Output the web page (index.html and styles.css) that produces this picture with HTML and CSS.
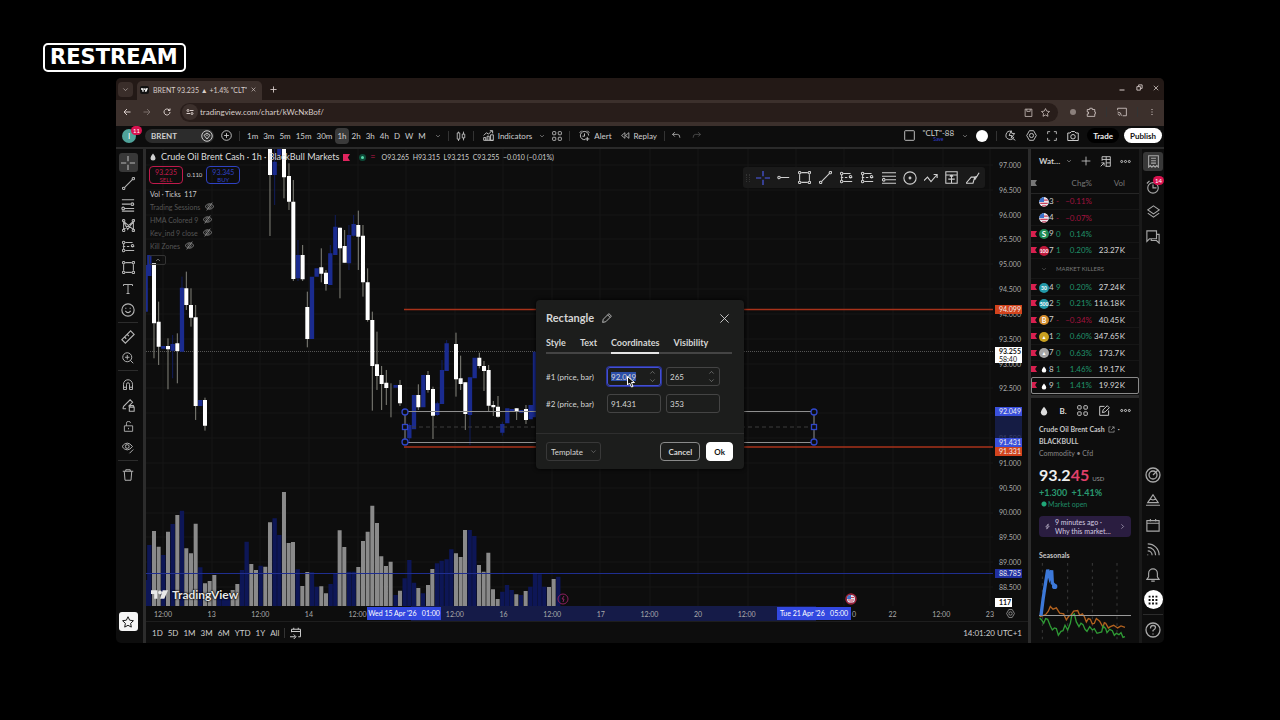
FILE: index.html
```html
<!DOCTYPE html>
<html lang="en">

<head>
    <meta charset="UTF-8" />
    <meta name="viewport" content="width=device-width, initial-scale=1" />
    <title>BRENT 93.235 ▲ +1.4% "CLT"</title>
    <link rel="stylesheet" href="styles.css">
</head>

<body>
    <!-- Icon set -->
    <svg class="sprite" aria-hidden="true">
        <symbol id="i-down" viewBox="0 0 16 16"><path d="M3 5.500l5 5 5-5" /></symbol>
        <symbol id="i-up" viewBox="0 0 16 16"><path d="M3 10.500l5-5 5 5" /></symbol>
        <symbol id="i-right" viewBox="0 0 16 16"><path d="M5.500 3l5 5-5 5" /></symbol>
        <symbol id="i-plus" viewBox="0 0 16 16"><path d="M8 1v14M1 8h14" /></symbol>
        <symbol id="i-pluscircle" viewBox="0 0 16 16"><circle cx="8" cy="8" r="7" /><path d="M8 4.500v7M4.500 8h7" /></symbol>
        <symbol id="i-close" viewBox="0 0 16 16"><path d="M2 2l12 12M14 2L2 14" /></symbol>
        <symbol id="i-back" viewBox="0 0 16 16"><path d="M15 8H2M8 2L2 8l6 6" /></symbol>
        <symbol id="i-forward" viewBox="0 0 16 16"><path d="M1 8h13M8 2l6 6-6 6" /></symbol>
        <symbol id="i-reload" viewBox="0 0 16 16"><path d="M14 8a6 6 0 1 1-2-4.500L14 5M14 1v4h-4" /></symbol>
        <symbol id="i-tune" viewBox="0 0 16 16"><circle cx="4" cy="5" r="2" /><path d="M8 5h7M1 11h7" /><circle cx="12" cy="11" r="2" /></symbol>
        <symbol id="i-star" viewBox="0 0 16 16"><path d="M8 1l2.200 4.600 5 .7-3.700 3.500.9 5L8 12.400 3.600 14.800l.9-5L.8 6.300l5-.7z" /></symbol>
        <symbol id="i-clip" viewBox="0 0 16 16"><path d="M2 2h12v13H2zM5 2v4h6V2" /></symbol>
        <symbol id="i-puzzle" viewBox="0 0 16 16"><path d="M2 4h4V2h4v2h4v4h1v3h-1v4H2v-4h2V8H2z" /></symbol>
        <symbol id="i-cast" viewBox="0 0 16 16"><path d="M1 5V2h14v12H9M1 8a6 6 0 0 1 6 6M1 11a3 3 0 0 1 3 3" /></symbol>
        <symbol id="i-kebab" viewBox="0 0 16 16"><path d="M8 2v2M8 7v2M8 12v2" /></symbol>
        <symbol id="i-more" viewBox="0 0 16 16"><circle cx="2.500" cy="8" r="1.500" /><circle cx="8" cy="8" r="1.500" /><circle cx="13.500" cy="8" r="1.500" /></symbol>
        <symbol id="i-min" viewBox="0 0 16 16"><path d="M3 12h10" /></symbol>
        <symbol id="i-restore" viewBox="0 0 16 16"><path d="M2 6h8v8H2zM6 6V2h8v8h-4" /></symbol>
        <symbol id="i-tag" viewBox="0 0 16 16"><circle cx="8" cy="8" r="7" /><path d="M4 7l4-3 4 3-4 5zM7 7h2" /></symbol>
        <symbol id="i-candle" viewBox="0 0 16 16"><path d="M2 3h4v10H2zM4 1v2M4 13v3M10 5h4v6h-4zM12 1v4M12 11v4" /></symbol>
        <symbol id="i-indicators" viewBox="0 0 16 16"><path d="M1 8l4-4 3 2 5-5M10 1h4v4M1 15v-4h3v4M6 15V9h3v6M11 15V7h4v8zM1 15h14" /></symbol>
        <symbol id="i-grid" viewBox="0 0 16 16"><rect x="1" y="1" width="5" height="5" rx="1" /><rect x="10" y="1" width="5" height="5" rx="1" /><rect x="1" y="10" width="5" height="5" rx="1" /><rect x="10" y="10" width="5" height="5" rx="1" /></symbol>
        <symbol id="i-alert" viewBox="0 0 16 16"><path d="M14 8a6 6 0 1 0-5 6M8 5v4H5M1 4l3-3M12 1l3 3M12 10v6M9 13h6" /></symbol>
        <symbol id="i-replay" viewBox="0 0 16 16"><path d="M7 3v10L1 8zM14 3v10L8 8z" /></symbol>
        <symbol id="i-undo" viewBox="0 0 16 16"><path d="M5 2L1 6l4 4M1 6h9q4 0 4 6" /></symbol>
        <symbol id="i-redo" viewBox="0 0 16 16"><path d="M11 2l4 4-4 4M15 6H6q-4 0-4 6" /></symbol>
        <symbol id="i-square" viewBox="0 0 16 16"><rect x="1" y="1" width="14" height="14" rx="1" /></symbol>
        <symbol id="i-quick" viewBox="0 0 16 16"><path d="M9 2a6 6 0 1 0 4 8M9 1L6 8h4l-1 4 5-7h-4zM11 12l4 3" /></symbol>
        <symbol id="i-settings" viewBox="0 0 16 16"><path d="M5 1h6l4 7-4 7H5L1 8z" /><circle cx="8" cy="8" r="3" /></symbol>
        <symbol id="i-full" viewBox="0 0 16 16"><path d="M1 5V1h4M11 1h4v4M15 11v4h-4M5 15H1v-4" /></symbol>
        <symbol id="i-camera" viewBox="0 0 16 16"><path d="M1 4h3l2-2h4l2 2h3v10H1z" /><circle cx="8" cy="9" r="3" /></symbol>
        <symbol id="i-cross" viewBox="0 0 16 16"><path d="M8 0v6M8 10v6M0 8h6M10 8h6" /></symbol>
        <symbol id="i-line" viewBox="0 0 16 16"><path d="M3 13L13 3" /><circle cx="2" cy="14" r="1.500" /><circle cx="14" cy="2" r="1.500" /></symbol>
        <symbol id="i-hline" viewBox="0 0 16 16"><path d="M4 8h11" /><circle cx="2.500" cy="8" r="1.500" /></symbol>
        <symbol id="i-fib" viewBox="0 0 16 16"><path d="M1 2h14M1 7h10M4 12h11M1 15h14" /><circle cx="13" cy="7" r="1.500" /><circle cx="2.500" cy="12" r="1.500" /></symbol>
        <symbol id="i-lines" viewBox="0 0 16 16"><path d="M0 2h16M0 6h16M4 10h12M0 14h16" /><circle cx="2" cy="10" r="1.500" /></symbol>
        <symbol id="i-pattern" viewBox="0 0 16 16"><path d="M2 13V3l12 10V3L2 13M2 3l5 10 7-10" /><circle cx="2" cy="2" r="1.500" /><circle cx="14" cy="2" r="1.500" /><circle cx="2" cy="14" r="1.500" /><circle cx="14" cy="14" r="1.500" /></symbol>
        <symbol id="i-forecast" viewBox="0 0 16 16"><path d="M4 3h9M4 13h11M1 8h3M6 8h3M11 8h4M2 5v6" /><circle cx="2" cy="3" r="1.500" /><circle cx="2" cy="13" r="1.500" /><circle cx="13" cy="7" r="1.500" /></symbol>
        <symbol id="i-rect" viewBox="0 0 16 16"><path d="M4 2h8M4 14h8M2 4v8M14 4v8" /><circle cx="2" cy="2" r="1.500" /><circle cx="14" cy="2" r="1.500" /><circle cx="2" cy="14" r="1.500" /><circle cx="14" cy="14" r="1.500" /></symbol>
        <symbol id="i-text" viewBox="0 0 16 16"><path d="M2 4V2h12v2M8 2v12M6 14h4" /></symbol>
        <symbol id="i-smile" viewBox="0 0 16 16"><circle cx="8" cy="8" r="7" /><path d="M5 9q3 4 6 0M5.500 5.500v1M10.500 5.500v1" /></symbol>
        <symbol id="i-ruler" viewBox="0 0 16 16"><path d="M1 11L11 1l4 4L5 15zM4 8l2 2M7 5l2 2" /></symbol>
        <symbol id="i-zoom" viewBox="0 0 16 16"><circle cx="7" cy="7" r="6" /><path d="M11 11l4 4M7 4v6M4 7h6" /></symbol>
        <symbol id="i-magnet" viewBox="0 0 16 16"><path d="M2 14V7a6 6 0 0 1 12 0v7h-4V7a2 2 0 0 0-4 0v7zM2 11h4M10 11h4" /></symbol>
        <symbol id="i-penlock" viewBox="0 0 16 16"><path d="M1 12l1-3 8-8 3 3-5 5M9 10h6v5H9zM10 10V8h4v2M1 12h4" /></symbol>
        <symbol id="i-lock" viewBox="0 0 16 16"><path d="M2 7h12v8H2zM5 7V4a3 3 0 0 1 6-1M8 10v2" /></symbol>
        <symbol id="i-eyepen" viewBox="0 0 16 16"><path d="M0 6q7-9 14 0-7 9-14 0zM10 15l5-5" /><circle cx="7" cy="6" r="2.500" /></symbol>
        <symbol id="i-trash" viewBox="0 0 16 16"><path d="M1 3h14M5 3V1h6v2M3 3l1 12h8l1-12" /></symbol>
        <symbol id="i-pencil" viewBox="0 0 16 16"><path d="M1 15l1-5 9-9 4 4-9 9zM9 3l4 4" /></symbol>
        <symbol id="i-eyeoff" viewBox="0 0 16 16"><path d="M0 8q8-10 16 0-8 10-16 0zM3 15L13 1" /><circle cx="8" cy="8" r="3" /></symbol>
        <symbol id="i-circle" viewBox="0 0 16 16"><circle cx="8" cy="8" r="7" /><circle cx="8" cy="8" r="1" /></symbol>
        <symbol id="i-zigzag" viewBox="0 0 16 16"><path d="M0 11l4-4 4 5 7-8M11 4h4v4" /></symbol>
        <symbol id="i-range" viewBox="0 0 16 16"><path d="M1 1h14v14H1zM1 5h14M8 5v10M4 10h8M6 7l2-2 2 2" /></symbol>
        <symbol id="i-path" viewBox="0 0 16 16"><path d="M0 14h8l2-7H6zM10 10l5-8M10 7l3-1" /></symbol>
        <symbol id="i-addtable" viewBox="0 0 16 16"><path d="M3 7V1h12v14H8M3 5h12M9 1v14M9 10h6M1 15l5-5M2 10h4v4" /></symbol>
        <symbol id="i-list" viewBox="0 0 16 16"><path d="M2 1h12v14l-2-2-2 2-2-2-2 2-2-2-2 2zM5 4h6M5 7h6M5 10h6" /></symbol>
        <symbol id="i-clock" viewBox="0 0 16 16"><circle cx="8" cy="9" r="6" /><path d="M8 5v4h4M1 4l3-3M12 1l3 3" /></symbol>
        <symbol id="i-layers" viewBox="0 0 16 16"><path d="M8 1l7 5-7 5-7-5zM1 10l7 5 7-5" /></symbol>
        <symbol id="i-chat" viewBox="0 0 16 16"><path d="M1 1h11v9H4l-3 3zM12 5h3v10l-3-3H6v-2" /></symbol>
        <symbol id="i-target" viewBox="0 0 16 16"><circle cx="8" cy="8" r="7" /><circle cx="8" cy="8" r="4" /><path d="M8 8l5-5" /></symbol>
        <symbol id="i-ideas" viewBox="0 0 16 16"><path d="M0 14h16M2 11l6-9 6 9zM5 7l3 1 3-1" /></symbol>
        <symbol id="i-calendar" viewBox="0 0 16 16"><path d="M1 3h14v12H1zM1 6h14M5 1v3M11 1v3" /></symbol>
        <symbol id="i-feed" viewBox="0 0 16 16"><path d="M2 13v1M2 9a5 5 0 0 1 5 5M2 5a9 9 0 0 1 9 9M2 1a13 13 0 0 1 13 13" /></symbol>
        <symbol id="i-bell" viewBox="0 0 16 16"><path d="M1 13l2-3V6a5 5 0 0 1 10 0v4l2 3zM6 15h4" /></symbol>
        <symbol id="i-dots" viewBox="0 0 16 16"><path class="fill" d="M1 1h3v3H1zM6.500 1h3v3h-3zM12 1h3v3h-3zM1 6.500h3v3H1zM6.500 6.500h3v3h-3zM12 6.500h3v3h-3zM1 12h3v3H1zM6.500 12h3v3h-3zM12 12h3v3h-3z" /></symbol>
        <symbol id="i-help" viewBox="0 0 16 16"><circle cx="8" cy="8" r="7" /><path d="M5.500 6.500q0-3 2.500-3t2.500 2q0 1.500-2.500 3v1M8 11.500v1" /></symbol>
        <symbol id="i-goto" viewBox="0 0 16 16"><path d="M2 7V3h12v10h-3M2 6h12M5 1v2M11 1v2M0 13h7M5 10l3 3-3 3" /></symbol>
        <symbol id="i-external" viewBox="0 0 16 16"><path d="M6 2H2v12h12v-4M9 2h5v5M14 2L7 9" /></symbol>
        <symbol id="i-edit" viewBox="0 0 16 16"><path d="M8 2H1v13h13V8M5 11l1-4 6-6 3 3-6 6z" /></symbol>
        <symbol id="i-bolt" viewBox="0 0 16 16"><path d="M10 2L4 9h4l-2 5 6-7H8z" /></symbol>
        <symbol id="i-drop" viewBox="0 0 16 16"><path class="fill" d="M8 1q5 6 5 9a5 5 0 0 1-10 0q0-3 5-9z" /></symbol>
        <symbol id="i-flag" viewBox="0 0 16 16"><path class="fill" d="M0 0h16l-5 8 5 8H0z" /></symbol>
        <symbol id="i-tv" viewBox="0 0 32 16"><path class="fill" d="M0 0h12v16H6V7H0zM22 0h10l-7 16h-8z" /><circle class="fill" cx="17" cy="4" r="3.500" /></symbol>
        <symbol id="i-us" viewBox="0 0 16 16"><circle cx="8" cy="8" r="8" style="fill:#e9e4ec;stroke:none" /><path d="M2 5h12M2 10h12M5 14h7" style="stroke:#c9415c;stroke-width:2" /><path d="M0 8a8 8 0 0 1 8-8v8z" style="fill:#3d71c9;stroke:none" /></symbol>
    </svg>

    <h1 class="logo">RESTREAM</h1>

    <div class="browser">
        <header class="tabstrip">
            <button class="tab-search" aria-label="Search tabs"><svg class="icon s7"><use href="#i-down" /></svg></button>
            <div class="tab">
                <span class="tab-icon"><svg class="tv-mark"><use href="#i-tv" /></svg></span>
                <span class="tab-title">BRENT 93.235 ▲ +1.4% "CLT"</span>
                <button aria-label="Close tab"><svg class="icon s5 bold"><use href="#i-close" /></svg></button>
            </div>
            <button class="new-tab" aria-label="New tab"><svg class="icon s7 bold"><use href="#i-plus" /></svg></button>
            <div class="window-buttons">
                <button aria-label="Minimize"><svg class="icon s8 bold"><use href="#i-min" /></svg></button>
                <button aria-label="Restore"><svg class="icon s7 bold"><use href="#i-restore" /></svg></button>
                <button aria-label="Close"><svg class="icon s6 bold"><use href="#i-close" /></svg></button>
            </div>
        </header>

        <div class="addressbar">
            <button aria-label="Back"><svg class="icon s8 bold"><use href="#i-back" /></svg></button>
            <button class="dim" aria-label="Forward"><svg class="icon s8 bold"><use href="#i-forward" /></svg></button>
            <button aria-label="Reload"><svg class="icon s8 bold"><use href="#i-reload" /></svg></button>
            <div class="omnibox">
                <span class="site-info"><svg class="icon s8 bold"><use href="#i-tune" /></svg></span>
                <input class="url" type="text" aria-label="Address" value="tradingview.com/chart/kWcNxBof/" />
                <svg class="icon s9"><use href="#i-clip" /></svg>
                <svg class="icon s9"><use href="#i-star" /></svg>
            </div>
            <div class="extensions">
                <span class="ext-dot"></span>
                <svg class="icon s10"><use href="#i-puzzle" /></svg>
                <span class="sep"></span>
                <svg class="icon s10"><use href="#i-cast" /></svg>
                <span class="sep"></span>
                <svg class="icon s8 bold"><use href="#i-kebab" /></svg>
            </div>
        </div>

        <div class="topbar">
            <span class="avatar">I<span class="badge">11</span></span>
            <button class="symbol-btn">BRENT <svg class="icon s12"><use href="#i-tag" /></svg></button>
            <button aria-label="Compare"><svg class="icon s11"><use href="#i-pluscircle" /></svg></button>
            <span class="sep"></span>
            <div class="intervals">
                <button>1m</button><button>3m</button><button>5m</button><button>15m</button><button>30m</button><button class="active">1h</button><button>2h</button><button>3h</button><button>4h</button><button>D</button><button>W</button><button>M</button>
            </div>
            <svg class="icon s6"><use href="#i-down" /></svg>
            <span class="sep"></span>
            <button aria-label="Candles"><svg class="icon s10"><use href="#i-candle" /></svg></button>
            <span class="sep"></span>
            <button class="with-icon"><svg class="icon s11"><use href="#i-indicators" /></svg>Indicators</button>
            <svg class="icon s6"><use href="#i-down" /></svg>
            <button aria-label="Templates"><svg class="icon s10"><use href="#i-grid" /></svg></button>
            <span class="sep"></span>
            <button class="with-icon"><svg class="icon s11"><use href="#i-alert" /></svg>Alert</button>
            <button class="with-icon"><svg class="icon s9"><use href="#i-replay" /></svg>Replay</button>
            <span class="sep"></span>
            <button aria-label="Undo"><svg class="icon s9"><use href="#i-undo" /></svg></button>
            <button class="dim redo" aria-label="Redo"><svg class="icon s9"><use href="#i-redo" /></svg></button>
            <div class="topbar-right">
                <svg class="icon s11"><use href="#i-square" /></svg>
                <div class="layout-name"><span>"CLT"-88</span><a href="#">Save</a></div>
                <svg class="icon s6"><use href="#i-down" /></svg>
                <span class="white-dot"></span>
                <span class="sep"></span>
                <div class="chart-actions">
                    <svg class="icon s11"><use href="#i-quick" /></svg>
                    <svg class="icon s11"><use href="#i-settings" /></svg>
                    <svg class="icon s10"><use href="#i-full" /></svg>
                    <svg class="icon s12"><use href="#i-camera" /></svg>
                </div>
                <div class="actions">
                    <button class="trade">Trade</button>
                    <button class="publish">Publish</button>
                </div>
            </div>
        </div>

        <div class="workspace">
            <nav class="tools" aria-label="Drawing tools">
                <button class="active" aria-label="Cross"><svg class="icon s14"><use href="#i-cross" /></svg></button>
                <button aria-label="Trend line"><svg class="icon s13"><use href="#i-line" /></svg></button>
                <button aria-label="Fib"><svg class="icon s14"><use href="#i-fib" /></svg></button>
                <button aria-label="Patterns"><svg class="icon s13"><use href="#i-pattern" /></svg></button>
                <button aria-label="Forecast"><svg class="icon s13"><use href="#i-forecast" /></svg></button>
                <button aria-label="Shapes"><svg class="icon s13"><use href="#i-rect" /></svg></button>
                <button aria-label="Text"><svg class="icon s12"><use href="#i-text" /></svg></button>
                <button aria-label="Emoji"><svg class="icon s14"><use href="#i-smile" /></svg></button>
                <hr>
                <button aria-label="Measure"><svg class="icon s14"><use href="#i-ruler" /></svg></button>
                <button aria-label="Zoom"><svg class="icon s12"><use href="#i-zoom" /></svg></button>
                <hr>
                <button aria-label="Magnet"><svg class="icon s12"><use href="#i-magnet" /></svg></button>
                <button aria-label="Stay in drawing mode"><svg class="icon s13"><use href="#i-penlock" /></svg></button>
                <button aria-label="Lock"><svg class="icon s11"><use href="#i-lock" /></svg></button>
                <button aria-label="Hide"><svg class="icon s12"><use href="#i-eyepen" /></svg></button>
                <hr>
                <button aria-label="Remove"><svg class="icon s12"><use href="#i-trash" /></svg></button>
                <button class="favorites" aria-label="Favorites"><svg class="icon s12"><use href="#i-star" /></svg></button>
            </nav>

            <main class="center">
                <div class="chart-row">
                    <div class="plot">
                        <svg class="chart" viewBox="146 149 847 457" preserveAspectRatio="none">
                            <!-- grid -->
                            <path class="grid" d="M146 165H993M146 190H993M146 215H993M146 239H993M146 264H993M146 289H993M146 314H993M146 339H993M146 364H993M146 388H993M146 413H993M146 438H993M146 463H993M146 488H993M146 513H993M146 537H993M146 562H993M146 587H993" />
                            <path class="grid" d="M163 149V606M212 149V606M260 149V606M309 149V606M358 149V606M406 149V606M455 149V606M503 149V606M552 149V606M600 149V606M650 149V606M698 149V606M748 149V606M796 149V606M844 149V606M893 149V606M943 149V606M990 149V606" />
                            <!-- volume -->
                            <g transform="translate(110 480) scale(.3333)">
                                <path class="vol-blue" d="M107 300V379M118 195V379M160 225V379M188 132V379M216 92V379M271 262V379M327 345V379M341 345V379M354 340V379M396 270V379M410 185V379M452 257V379M494 115V379M508 165V379M563 268V379M606 277V379M620 320V379M662 312V379M676 280V379M717 275V379M731 275V379M857 345V379" />
                                <path class="vol-gray" d="M132 153V379M146 200V379M174 155V379M202 105V379M229 205V379M243 220V379M257 131V379M285 310V379M299 303V379M313 285V379M368 330V379M382 312V379M424 252V379M438 270V379M466 260V379M480 127V379M522 36V379M536 189V379M549 186V379M577 318V379M592 276V379M634 319V379M648 340V379M689 151V379M703 201V379M745 261V379M759 183V379M773 155V379M787 77V379M801 129V379M814 229V379M828 258V379M842 245V379M870 332V379" />
                            </g>
                            <g transform="translate(400 480) scale(.3333)">
                                <path class="vol-blue" d="M14 295V379M28 240V379M42 308V379M69 340V379M111 250V379M125 242V379M140 238V379M154 208V379M209 150V379M223 168V379M307 335V379M321 315V379M335 330V379M363 345V379M391 320V379M405 278V379M419 283V379M433 320V379M475 290V379" />
                                <path class="vol-gray" d="M55 324V379M84 315V379M97 267V379M168 220V379M182 231V379M195 150V379M237 255V379M251 275V379M265 218V379M279 328V379M293 357V379M349 343V379M377 333V379M447 321V379M461 297V379" />
                            </g>
                            <path class="line-blue" d="M146 573.500H993" />
                            <path class="line-last" d="M146 351.500H993" />
                            <!-- candles -->
                            <g transform="translate(110 145) scale(.3333)">
                                <path class="wick-blue" d="M216 395V620M494 10V180M564 285V408M661 300V420M676 210V330M717 240V375M731 210V275M188 570V700" />
                                <path class="wick" d="M132 535V640M146 470V660M174 580V733M202 565V715M229 380V495M243 430V545M257 480V825M285 758V857M480 90V273M522 30V160M537 55V195M550 105V408M578 300V408M592 440V607M634 310V412M648 375V437M690 248V460M704 255V353M745 197V375M759 240V455M773 370V530M787 500V797M801 560V735M815 663V795M829 675V780M843 715V817M870 705V783" />
                                <path class="body-blue" d="M107 360V500M118 330V393M160 603V611M188 597V617M216 428V620M271 765V783M494 50V90M508 0V30M564 330V400M606 395V582M620 370V395M661 325V420M676 245V330M717 270V355M731 237V272M857 720V728" />
                                <path class="body" d="M132 355V535M146 530V605M174 603V613M202 595V618M229 430V480M243 480V518M257 517V783M285 765V842M480 0V90M522 0V97M537 93V170M550 170V402M578 330V403M592 486V582M634 367V386M648 383V417M690 248V310M704 303V353M745 240V275M759 272V412M773 412V525M787 525V663M801 658V693M815 690V717M829 713V729M870 720V775" />
                            </g>
                            <g transform="translate(380 290) scale(.3333)">
                                <path class="wick-blue" d="M88 400V460M186 210V342M200 150V243M270 262V465M367 395V437M172 335V378" />
                                <path class="wick" d="M115 283V360M144 243V308M159 290V447M228 128V320M242 197V300M256 277V420M298 188V235M312 213V303M326 225V365M340 333V378M354 318V383M410 355V390M438 345V402" />
                                <path class="body-blue" d="M88 405V445M102 315V418M130 255V352M172 340V375M186 240V342M200 160V243M270 262V375M284 203V265M367 402V428M382 355V400M396 357V366M424 360V368M452 345V388M465 185V382" />
                                <path class="body" d="M115 315V352M144 255V300M159 297V377M228 162V268M242 265V282M256 277V372M298 203V228M312 228V243M326 240V347M340 345V352M354 350V380M410 355V365M438 357V390" />
                            </g>
                            <!-- drawings -->
                            <path class="line-red" d="M404 309.500H993M404 447H993" />
                            <path class="shape-mid" d="M405 427H814" />
                            <path class="shape" d="M405 411.500H814V442.500H405z" />
                            <g class="handles"><circle cx="405" cy="412" r="3" /><rect x="402.500" y="424.500" width="5" height="5" /><circle cx="405" cy="442" r="3" /><circle cx="814" cy="412" r="3" /><rect x="811.500" y="424.500" width="5" height="5" /><circle cx="814" cy="442" r="3" /></g>
                            <circle class="event" cx="563" cy="599" r="5" /><path class="event" d="M564 596l-2 3h2l-1 3" />
                            <circle class="event-us" cx="851" cy="599" r="5" />
                            <use href="#i-us" x="847" y="595" width="8" height="8" />
                        </svg>

                        <div class="legend">
                            <div class="legend-title">
                                <svg class="icon s8"><use href="#i-drop" /></svg>
                                <span class="name">Crude Oil Brent Cash · 1h · BlackBull Markets</span>
                                <svg class="icon s7 flag"><use href="#i-flag" /></svg>
                                <span class="status"></span><span class="equal">=</span>
                                <span class="ohlc">O93.265&nbsp; H93.315&nbsp; L93.215&nbsp; C93.255&nbsp; −0.010 (−0.01%)</span>
                            </div>
                            <div class="quotes">
                                <button class="sell">93.235<small>SELL</small></button>
                                <span>0.110</span>
                                <button class="buy">93.345<small>BUY</small></button>
                            </div>
                            <ul class="studies">
                                <li class="on">Vol · Ticks&nbsp; 117</li>
                                <li>Trading Sessions <svg class="icon s9"><use href="#i-eyeoff" /></svg></li>
                                <li>HMA Colored 9 <svg class="icon s9"><use href="#i-eyeoff" /></svg></li>
                                <li>Kev_ind 9 close <svg class="icon s9"><use href="#i-eyeoff" /></svg></li>
                                <li>Kill Zones <svg class="icon s9"><use href="#i-eyeoff" /></svg></li>
                            </ul>
                            <button class="collapse" aria-label="Collapse"><svg class="icon s6"><use href="#i-up" /></svg></button>
                        </div>

                        <div class="draw-bar">
                            <span class="grip"></span>
                            <button class="picked" aria-label="Cross"><svg class="icon s14"><use href="#i-cross" /></svg></button>
                            <button aria-label="Ray"><svg class="icon s13"><use href="#i-hline" /></svg></button>
                            <button aria-label="Rectangle"><svg class="icon s13"><use href="#i-rect" /></svg></button>
                            <button aria-label="Line"><svg class="icon s13"><use href="#i-line" /></svg></button>
                            <button aria-label="Long"><svg class="icon s13"><use href="#i-forecast" /></svg></button>
                            <button aria-label="Short"><svg class="icon s13"><use href="#i-forecast" /></svg></button>
                            <button aria-label="Fib"><svg class="icon s14"><use href="#i-lines" /></svg></button>
                            <button aria-label="Circle"><svg class="icon s14"><use href="#i-circle" /></svg></button>
                            <button aria-label="Path"><svg class="icon s14"><use href="#i-zigzag" /></svg></button>
                            <button aria-label="Range"><svg class="icon s13"><use href="#i-range" /></svg></button>
                            <button aria-label="Brush"><svg class="icon s14"><use href="#i-path" /></svg></button>
                        </div>

                        <div class="watermark"><svg class="tv-mark"><use href="#i-tv" /></svg><span>TradingView</span></div>
                    </div>

                    <div class="price-axis">
                        <span>97.000</span><span>96.500</span><span>96.000</span><span>95.500</span><span>95.000</span><span>94.500</span><span>94.000</span><span>93.500</span><span>93.000</span><span>92.500</span><span>92.000</span><span>91.500</span><span>91.000</span><span>90.500</span><span>90.000</span><span>89.500</span><span>89.000</span><span>88.500</span>
                        <div class="price-range"></div>
                        <div class="tag orange t-upper">94.099</div>
                        <div class="tag white t-last"><b>93.255</b>58:40</div>
                        <div class="tag blue t-top">92.049</div>
                        <div class="tag blue t-bottom">91.431</div>
                        <div class="tag orange t-lower">91.331</div>
                        <div class="tag navy t-line">88.785</div>
                        <div class="tag white short t-vol"><b>117</b></div>
                    </div>
                </div>

                <div class="time-axis">
                    <div class="time-range"></div>
                    <div class="ticks">
                        <span>12:00</span><span>13</span><span>12:00</span><span>14</span><span>12:00</span><span></span><span>12:00</span><span>16</span><span>12:00</span><span>17</span><span>12:00</span><span>20</span><span>12:00</span><span></span><span class="cut">0</span><span>22</span><span>12:00</span><span>23</span>
                    </div>
                    <svg class="icon s9"><use href="#i-settings" /></svg>
                    <div class="time-tag start">Wed 15 Apr '26 &nbsp; 01:00</div>
                    <div class="time-tag end">Tue 21 Apr '26 &nbsp; 05:00</div>
                </div>

                <div class="bottombar">
                    <button>1D</button><button>5D</button><button>1M</button><button>3M</button><button>6M</button><button>YTD</button><button>1Y</button><button>All</button>
                    <span class="sep"></span>
                    <button aria-label="Go to"><svg class="icon s12"><use href="#i-goto" /></svg></button>
                    <span class="clock">14:01:20 UTC+1</span>
                </div>
            </main>

            <aside class="sidebar">
                <div class="watch-head">
                    <button class="watch-name">Wat… <svg class="icon s6"><use href="#i-down" /></svg></button>
                    <button aria-label="Add symbol"><svg class="icon s10"><use href="#i-plus" /></svg></button>
                    <button aria-label="Advanced view"><svg class="icon s11"><use href="#i-addtable" /></svg></button>
                    <button aria-label="More"><svg class="icon s11"><use href="#i-more" /></svg></button>
                </div>
                <table class="watchlist">
                    <colgroup><col class="c-flag"><col class="c-sym"><col class="c-last"><col class="c-chg"><col class="c-vol"><col></colgroup>
                    <thead>
                        <tr><th><svg class="icon s6"><use href="#i-flag" /></svg></th><th></th><th></th><th>Chg%</th><th>Vol</th><th></th></tr>
                    </thead>
                    <tbody>
                        <tr class="down"><td></td><td><svg class="coin"><use href="#i-us" /></svg>3</td><td>-</td><td>−0.11%</td><td></td><td></td></tr>
                        <tr class="down"><td></td><td><svg class="coin"><use href="#i-us" /></svg>4</td><td>-</td><td>−0.07%</td><td></td><td></td></tr>
                        <tr><td><svg class="icon s6"><use href="#i-flag" /></svg></td><td><span class="coin green">S</span>9</td><td>0</td><td>0.14%</td><td></td><td></td></tr>
                        <tr><td><svg class="icon s6"><use href="#i-flag" /></svg></td><td><span class="coin red">100</span>7</td><td>1</td><td>0.20%</td><td>23.27&#8202;K</td><td></td></tr>
                        <tr class="group"><td></td><td><svg class="icon s6"><use href="#i-down" /></svg></td><td colspan="4">MARKET KILLERS</td></tr>
                        <tr><td><svg class="icon s6"><use href="#i-flag" /></svg></td><td><span class="coin teal">30</span>4</td><td>9</td><td>0.20%</td><td>27.24&#8202;K</td><td></td></tr>
                        <tr><td><svg class="icon s6"><use href="#i-flag" /></svg></td><td><span class="coin teal">500</span>2</td><td>5</td><td>0.21%</td><td>116.18&#8202;K</td><td></td></tr>
                        <tr class="down"><td><svg class="icon s6"><use href="#i-flag" /></svg></td><td><span class="coin amber">B</span>7</td><td>-</td><td>−0.34%</td><td>40.45&#8202;K</td><td></td></tr>
                        <tr><td><svg class="icon s6"><use href="#i-flag" /></svg></td><td><span class="coin gold">▲</span>1</td><td>2</td><td>0.60%</td><td>347.65&#8202;K</td><td></td></tr>
                        <tr><td><svg class="icon s6"><use href="#i-flag" /></svg></td><td><span class="coin silver">▲</span>7</td><td>0</td><td>0.63%</td><td>173.7&#8202;K</td><td></td></tr>
                        <tr><td><svg class="icon s6"><use href="#i-flag" /></svg></td><td><svg class="coin drop"><use href="#i-drop" /></svg>8</td><td>1</td><td>1.46%</td><td>19.17&#8202;K</td><td></td></tr>
                        <tr class="selected"><td><svg class="icon s6"><use href="#i-flag" /></svg></td><td><svg class="coin drop"><use href="#i-drop" /></svg>9</td><td>1</td><td>1.41%</td><td>19.92&#8202;K</td><td></td></tr>
                    </tbody>
                </table>

                <section class="details">
                    <div class="details-head">
                        <svg class="icon s10"><use href="#i-drop" /></svg>
                        <b>B.</b>
                        <svg class="icon s11"><use href="#i-grid" /></svg>
                        <svg class="icon s11"><use href="#i-edit" /></svg>
                        <svg class="icon s11"><use href="#i-more" /></svg>
                    </div>
                    <p>Crude Oil Brent Cash <svg class="icon s7"><use href="#i-external" /></svg> ·</p>
                    <p>BLACKBULL</p>
                    <p class="muted">Commodity • Cfd</p>
                    <div class="price">93.2<em>45</em><small>USD</small></div>
                    <div class="change">+1.300&nbsp; +1.41%</div>
                    <div class="market">Market open</div>
                    <a class="news" href="#">
                        <svg class="icon s7"><use href="#i-bolt" /></svg>
                        <span>9 minutes ago ·<br>Why this market…</span>
                        <svg class="icon s7"><use href="#i-right" /></svg>
                    </a>
                    <h2>Seasonals</h2>
                    <svg class="seasonals" viewBox="0 0 276 230" preserveAspectRatio="none">
                        <path d="M10 0V230M86 0V230M160 0V230M234 0V230" stroke="#3a3a3a" stroke-width="3" stroke-dasharray="8 12" />
                        <path d="M2 160L10 158 20 154 28 144 34 130 42 138 52 134 62 150 74 152 82 170 90 158 96 156 104 144 116 142 122 156 130 152 136 160 142 176 148 166 154 168 160 182 166 180 172 166 182 174 192 192 196 178 200 180 208 194 214 190 224 186 236 194 246 188 258 192" stroke="#b3621f" stroke-width="4" />
                        <path d="M2 164L8 170 14 180 20 166 26 168 34 188 40 200 46 194 52 196 58 216 66 204 72 202 78 186 86 200 94 180 98 158 106 152 112 176 120 190 126 180 132 184 138 198 144 204 152 190 160 200 166 196 174 210 188 206 192 188 200 196 204 208 212 198 220 202 226 216 232 210 240 214 246 208 252 222 258 220" stroke="#2f9a35" stroke-width="4" />
                        <path d="M0 157H276" stroke="#9a9a9a" stroke-width="3" />
                        <path d="M6 157L12 110 18 70 26 20 32 42 38 22 40 60 46 66" stroke="#3c78d8" stroke-width="10" /><circle cx="47" cy="70" r="8" fill="#3c78d8" stroke="none" />
                    </svg>
                </section>
            </aside>

            <nav class="rail" aria-label="Widgets">
                <button class="active" aria-label="Watchlist"><svg class="icon s13"><use href="#i-list" /></svg></button>
                <button aria-label="Alerts"><svg class="icon s14"><use href="#i-clock" /></svg><span class="badge">14</span></button>
                <button aria-label="Objects"><svg class="icon s13"><use href="#i-layers" /></svg></button>
                <button aria-label="Chats"><svg class="icon s14"><use href="#i-chat" /></svg></button>
                <button class="push" aria-label="Screeners"><svg class="icon s16"><use href="#i-target" /></svg></button>
                <button aria-label="Ideas"><svg class="icon s14"><use href="#i-ideas" /></svg></button>
                <button aria-label="Calendars"><svg class="icon s14"><use href="#i-calendar" /></svg></button>
                <button aria-label="News"><svg class="icon s14"><use href="#i-feed" /></svg></button>
                <button aria-label="Notifications"><svg class="icon s14"><use href="#i-bell" /></svg></button>
                <button class="apps" aria-label="Products"><svg class="icon s10"><use href="#i-dots" /></svg></button>
                <hr>
                <button aria-label="Help"><svg class="icon s16"><use href="#i-help" /></svg></button>
            </nav>
        </div>

        <form class="dialog" role="dialog" aria-label="Rectangle">
            <div class="dialog-head">
                <h2>Rectangle</h2>
                <svg class="icon s10"><use href="#i-pencil" /></svg>
                <button type="button" aria-label="Close"><svg class="icon s11"><use href="#i-close" /></svg></button>
            </div>
            <div class="tabs">
                <button type="button">Style</button>
                <button type="button">Text</button>
                <button type="button" class="current">Coordinates</button>
                <button type="button">Visibility</button>
            </div>
            <div class="fields">
                <label for="price1">#1 (price, bar)</label>
                <div class="field focused"><input id="price1" type="text" value="92.049" /><span class="spin"><svg class="icon s7"><use href="#i-up" /></svg><svg class="icon s7"><use href="#i-down" /></svg></span></div>
                <div class="field"><input type="text" aria-label="#1 bar" value="265" /><span class="spin"><svg class="icon s7"><use href="#i-up" /></svg><svg class="icon s7"><use href="#i-down" /></svg></span></div>
                <label for="price2">#2 (price, bar)</label>
                <div class="field"><input id="price2" type="text" value="91.431" /></div>
                <div class="field"><input type="text" aria-label="#2 bar" value="353" /></div>
            </div>
            <div class="dialog-foot">
                <div class="template">
                    <select aria-label="Template"><option>Template</option></select>
                    <svg class="icon s7"><use href="#i-down" /></svg>
                </div>
                <button type="button" class="cancel">Cancel</button>
                <button type="button" class="ok">Ok</button>
            </div>
            <svg class="cursor" viewBox="0 0 16 24"><path d="M1 1v17l4-4 4 8 3-1-3-8h6z" /></svg>
        </form>
    </div>
</body>

</html>
```
FILE: styles.css
```css
/* Reset */

* {
    margin: 0;
    padding: 0;
    box-sizing: border-box;
}

body {
    font-family: Lato, 'Open Sans', sans-serif;
    font-size: 9px;
    line-height: 12px;
    background: #000;
    color: #cfcfcf;
}

button,
input,
select {
    font: inherit;
    color: inherit;
    background: none;
    border: none;
    outline: none;
}

button {
    display: flex;
    align-items: center;
    justify-content: center;
    cursor: pointer;
    flex-shrink: 0;
}

a {
    text-decoration: none;
}

/* Icons */

.sprite {
    position: absolute;
    width: 0;
    height: 0;
}

.icon {
    fill: none;
    stroke: currentColor;
    stroke-width: 1.3;
    flex-shrink: 0;
    display: block;
}

.icon.bold {
    stroke-width: 2;
}

.fill {
    fill: currentColor;
    stroke: none;
}

.s5 { width: 5px; height: 5px; }
.s6 { width: 6px; height: 6px; }
.s7 { width: 7px; height: 7px; }
.s8 { width: 8px; height: 8px; }
.s9 { width: 9px; height: 9px; }
.s10 { width: 10px; height: 10px; }
.s11 { width: 11px; height: 11px; }
.s12 { width: 12px; height: 12px; }
.s13 { width: 13px; height: 13px; }
.s14 { width: 14px; height: 14px; }
.s16 { width: 16px; height: 16px; }

.dim {
    opacity: 0.4;
}

.sep {
    width: 1px;
    height: 10px;
    background: #333;
    flex-shrink: 0;
}

.badge {
    position: absolute;
    top: -3px;
    right: -6px;
    background: #d8124f;
    color: #fff;
    font-size: 6px;
    line-height: 9px;
    min-width: 10px;
    padding: 0 2px;
    border-radius: 5px;
    text-align: center;
}

.logo {
    width: fit-content;
    margin: 43px 0 6px 43px;
    padding: 0 6px 0 5px;
    border: 2px solid #fff;
    border-radius: 5px;
    color: #fff;
    font: 700 21px/25px 'DejaVu Sans', sans-serif;
}

/* Browser chrome */

.browser {
    position: relative;
    margin: 0 116px;
    border-radius: 5px;
    overflow: hidden;
    background: #0d0d0d;
}

.tabstrip {
    display: flex;
    align-items: center;
    height: 22px;
    padding: 0 5px 0 2px;
    background: #231916;
    color: #d8cdca;
}

.tab-search {
    width: 15px;
    height: 15px;
    border-radius: 4px;
    background: #3a2e2a;
}

.tab {
    display: flex;
    align-items: center;
    align-self: flex-end;
    gap: 4px;
    width: 125px;
    height: 19px;
    margin-left: 4px;
    padding: 0 6px 2px 3px;
    border-radius: 5px 5px 0 0;
    background: #3c302c;
}

.tab-icon {
    display: flex;
    padding: 2px 1px;
    border-radius: 2px;
    background: #111;
}

.tab-icon .tv-mark {
    width: 7px;
    height: 4px;
    color: #fff;
}

.tab-title {
    flex: 1;
    font-size: 7px;
    white-space: nowrap;
    overflow: hidden;
}

.new-tab {
    margin-left: 4px;
    padding: 4px;
}

.window-buttons {
    display: flex;
    gap: 10px;
    margin-left: auto;
    margin-bottom: 3px;
}

.addressbar {
    display: flex;
    align-items: center;
    height: 26px;
    padding: 0 8px 2px 7px;
    gap: 12px;
    background: #3c302c;
    color: #d8cdca;
}

.omnibox {
    display: flex;
    align-items: center;
    flex: 1;
    gap: 8px;
    height: 19px;
    padding: 0 8px 0 2px;
    margin-left: -3px;
    border-radius: 10px;
    background: #281d1a;
}

.site-info {
    padding: 4px;
    border-radius: 50%;
    background: #3c302c;
}

.url {
    flex: 1;
    margin-left: -6px;
    font-size: 8px;
}

.extensions {
    display: flex;
    align-items: center;
    gap: 10px;
}

.ext-dot {
    width: 6px;
    height: 6px;
    border-radius: 50%;
    background: #8b807c;
}

/* Top toolbar */

.topbar {
    display: flex;
    align-items: center;
    height: 23px;
    padding: 0 2px 2px 6px;
    border-bottom: 2px solid #2a2a2a;
    gap: 7px;
    font-size: 8px;
}

.avatar {
    position: relative;
    width: 14px;
    height: 14px;
    border-radius: 50%;
    background: #4fa39a;
    color: #fff;
    line-height: 14px;
    text-align: center;
    margin-right: 2px;
}

.symbol-btn {
    width: 69px;
    height: 14px;
    padding: 0 1px 0 6px;
    border-radius: 7px;
    background: #2c2c2c;
    font-weight: 700;
    justify-content: space-between;
}

.intervals {
    display: flex;
    gap: 5px;
    margin-right: 2px;
}

.intervals .active {
    background: #3a3a3a;
    border-radius: 2px;
    box-shadow: 0 0 0 2px #3a3a3a;
}

.with-icon {
    gap: 4px;
    margin-left: 2px;
}

.redo {
    margin-left: 4px;
}

.topbar-right {
    display: flex;
    align-items: center;
    gap: 8px;
    margin-left: auto;
}

.layout-name {
    display: flex;
    flex-direction: column;
    align-items: center;
    line-height: 8px;
}

.layout-name a {
    color: #3540d0;
    font-size: 5px;
    line-height: 5px;
}

.white-dot {
    width: 12px;
    height: 12px;
    border-radius: 50%;
    background: #fff;
}

.chart-actions {
    display: flex;
    align-items: center;
    gap: 10px;
}

.actions {
    display: flex;
    gap: 5px;
}

.trade,
.publish {
    height: 15px;
    padding: 0 6px;
    border-radius: 8px;
    font-weight: 700;
}

.trade {
    background: #000;
    color: #eee;
}

.publish {
    background: #fff;
    color: #111;
}

/* Workspace */

.workspace {
    display: flex;
}

.tools {
    display: flex;
    flex-direction: column;
    align-items: center;
    width: 30px;
    padding: 3px 3px 12px 0;
    border-right: 3px solid #2c2c2c;
    color: #b5b5b5;
}

.tools button {
    width: 19px;
    height: 21px;
}

.tools .active,
.rail .active {
    background: #383838;
    border-radius: 3px;
}

.tools .active {
    height: 19px;
    margin: 1px 0;
}

.tools hr,
.rail hr {
    width: 20px;
    border: none;
    border-top: 1px solid #2c2c2c;
    margin: 2px 0 3px;
}

.tools .favorites {
    height: 19px;
    margin-top: auto;
    border-radius: 3px;
    background: #f5f5f5;
    color: #111;
}

.center {
    flex: 1;
    min-width: 0;
}

.chart-row {
    display: flex;
}

.plot {
    position: relative;
    flex: 1;
    min-width: 0;
}

.chart {
    display: block;
    width: 100%;
    height: 457px;
    fill: none;
}

.grid { stroke: #161616; }
.vol-blue { stroke: #0d1656; stroke-width: 13; }
.vol-gray { stroke: #8a8a8a; stroke-width: 12; }
.wick { stroke: #85857c; stroke-width: 3; }
.wick-blue { stroke: #111d5c; stroke-width: 3; }
.body { stroke: #fff; stroke-width: 12; }
.body-blue { stroke: #1a2b8f; stroke-width: 13; }
.line-blue { stroke: #1f2e90; }
.line-last { stroke: #555; stroke-dasharray: 1 1; }
.line-red { stroke: #a8321a; stroke-width: 1.5; }
.shape { stroke: #8f8f8f; }
.shape-mid { stroke: #3c3c3c; stroke-dasharray: 4 3; }
.handles { stroke: #2f46c8; fill: #0d0d0d; stroke-width: 1.3; }
.event { stroke: #8c2060; }
.event-us { fill: #16204a; stroke: #a3243a; stroke-width: 1.5; }

.legend {
    position: absolute;
    top: 2px;
    left: 3px;
}

.legend-title {
    display: flex;
    align-items: center;
    gap: 4px;
    white-space: nowrap;
}

.name {
    font-size: 9px;
    color: #ddd;
}

.flag {
    color: #e0245e;
}

.status {
    width: 7px;
    height: 7px;
    margin-left: 5px;
    border-radius: 50%;
    border: 2px solid #0d4a38;
    background: #58d8a8;
}

.equal {
    color: #c01a4c;
}

.ohlc {
    margin-left: 2px;
    font-size: 7px;
}

.quotes {
    display: flex;
    align-items: center;
    gap: 4px;
    margin: 3px 0 3px;
    font-size: 6px;
}

.quotes button {
    flex-direction: column;
    width: 34px;
    height: 18px;
    border: 1px solid;
    border-radius: 4px;
    font-size: 7px;
    line-height: 8px;
}

.quotes small {
    font-size: 6px;
    line-height: 7px;
}

.sell {
    color: #c01a4c;
}

.buy {
    color: #2f42c4;
}

.studies {
    list-style: none;
    padding-left: 1px;
    font-size: 7px;
    color: #555;
}

.studies li {
    display: flex;
    align-items: center;
    gap: 5px;
    height: 13px;
}

.studies .on {
    color: #ccc;
}

.studies .icon {
    color: #999;
}

.collapse {
    width: 17px;
    height: 10px;
    margin-top: 3px;
    border: 1px solid #333;
    border-radius: 2px;
}

.draw-bar {
    position: absolute;
    top: 18px;
    right: 8px;
    display: flex;
    align-items: center;
    height: 21px;
    padding: 0 2px 0 0;
    border-radius: 3px;
    background: #1a1a1a;
}

.draw-bar button {
    width: 21px;
    height: 21px;
}

.draw-bar .picked {
    color: #4c5cf0;
}

.grip {
    width: 4px;
    height: 8px;
    margin: 0 2px 0 3px;
    border: dotted #333;
    border-width: 0 1px;
}

.watermark {
    position: absolute;
    left: 5px;
    bottom: 4px;
    display: flex;
    align-items: center;
    gap: 4px;
    color: #e8e8e8;
    font-size: 12px;
    line-height: 15px;
    font-weight: 700;
    text-shadow: 0 0 2px #000, 0 0 2px #000, 0 0 1px #000;
}

.watermark .tv-mark {
    width: 17px;
    height: 9px;
}

/* Axes */

.price-axis {
    position: relative;
    display: flex;
    flex-direction: column;
    justify-content: space-between;
    width: 35px;
    padding: 11px 0 14px 6px;
    font-size: 7px;
    line-height: 10px;
    color: #aaa;
}

.price-range {
    position: absolute;
    top: 262px;
    left: 2px;
    width: 27px;
    height: 31px;
    background: #182052;
    opacity: 0.8;
}

.tag {
    position: absolute;
    left: 2px;
    width: 27px;
    padding-left: 4px;
    line-height: 9px;
    color: #eee;
}

.tag b {
    display: block;
}

.orange { background: #d2431d; }
.tag.blue { background: #3a50dc; }
.navy { background: #2030a0; }
.tag.white { background: #fff; color: #111; }
.tag.short { width: 17px; }

.t-upper { top: 156px; }
.t-last { top: 198px; line-height: 8px; }
.t-top { top: 258px; }
.t-bottom { top: 289px; }
.t-lower { top: 298px; }
.t-line { top: 420px; }
.t-vol { top: 449px; }

.time-axis {
    position: relative;
    display: flex;
    align-items: center;
    height: 15px;
    padding: 0 13px 0 5px;
    font-size: 7px;
    color: #aaa;
}

.ticks {
    position: relative;
    display: flex;
    justify-content: space-between;
    flex: 1;
    margin-right: 4px;
}

.ticks span {
    width: 24px;
    text-align: center;
    white-space: nowrap;
}

.ticks .cut {
    text-align: right;
}

.time-range {
    position: absolute;
    left: 30%;
    right: 24%;
    top: 0;
    bottom: 0;
    background: #151b48;
}

.time-tag {
    position: absolute;
    top: 1px;
    width: 74px;
    background: #3248e0;
    color: #fff;
    line-height: 13px;
    text-align: center;
    white-space: nowrap;
}

.time-tag.start {
    left: 221px;
}

.time-tag.end {
    right: 177px;
}

.bottombar {
    display: flex;
    align-items: center;
    height: 22px;
    padding: 0 6px 0 6px;
    gap: 5px;
    border-top: 1px solid #1e1e1e;
    font-size: 8px;
}

.clock {
    margin-left: auto;
}

/* Right sidebar */

.sidebar {
    width: 114px;
    flex-shrink: 0;
    border-left: 3px solid #2c2c2c;
    border-right: 3px solid #1a1a1a;
}

.watch-head {
    display: flex;
    align-items: center;
    justify-content: space-between;
    height: 24px;
    padding: 0 8px;
}

.watch-name {
    gap: 6px;
    font-weight: 700;
    font-size: 8px;
}

.watchlist {
    width: 100%;
    height: 221px;
    table-layout: fixed;
    border-collapse: collapse;
    font-size: 8px;
    line-height: 10px;
}

.c-flag { width: 7px; }
.c-sym { width: 18px; }
.c-last { width: 5px; }
.c-chg { width: 31px; }
.c-vol { width: 33px; }

.watchlist th {
    height: 20px;
    border-bottom: 1px solid #262626;
    color: #777;
    font-weight: 400;
    text-align: right;
    white-space: nowrap;
}

.watchlist td {
    height: 16px;
    border-bottom: 1px solid #161616;
    white-space: nowrap;
    color: #20926a;
}

.watchlist td:first-child .icon {
    color: #d8204f;
}

.watchlist td:nth-child(2) {
    color: #ccc;
}

.watchlist td:nth-child(4) {
    text-align: right;
}

.watchlist td:nth-child(5) {
    color: #d5d5d5;
    text-align: right;
}

.watchlist .down td:nth-child(3),
.watchlist .down td:nth-child(4) {
    color: #a3133f;
}

.watchlist .group td {
    height: 20px;
    font-size: 6px;
    text-align: left;
    color: #777;
}

.watchlist .group td:nth-child(2) .icon {
    margin-left: 3px;
}

.watchlist .selected {
    outline: 1px solid #8a8a8a;
    outline-offset: -1px;
    border-radius: 2px;
}

.coin {
    display: inline-block;
    width: 10px;
    height: 10px;
    margin: 0 0 0 1px;
    border-radius: 50%;
    color: #fff;
    font-size: 5px;
    font-weight: 700;
    text-align: center;
    vertical-align: middle;
}

.coin.green { background: #1f8a55; font-size: 8px; }
.coin.red { background: #c01a3c; }
.coin.teal { background: #2298a8; }
.coin.amber { background: #d08a2c; font-size: 7px; }
.coin.gold { background: #c8a020; }
.coin.silver { background: #a5a5a5; }
.coin.drop { height: 7px; }

.details {
    border-top: 3px solid #2c2c2c;
    padding: 0 8px;
    margin-top: 1px;
    font-size: 7px;
    color: #c5c5c5;
}

.details-head {
    display: flex;
    align-items: center;
    justify-content: space-between;
    height: 25px;
    font-size: 8px;
    color: #ddd;
}

.details p {
    display: flex;
    align-items: center;
    gap: 3px;
    line-height: 12px;
    font-weight: 700;
}

.details p.muted {
    color: #888;
    font-weight: 400;
}

.price {
    margin-top: 7px;
    font-size: 16px;
    line-height: 18px;
    font-weight: 700;
    color: #eee;
}

.price em {
    font-style: normal;
    color: #e0406a;
}

.price small {
    margin-left: 3px;
    font-size: 6px;
    font-weight: 400;
    color: #999;
}

.change {
    font-size: 9px;
    line-height: 10px;
    font-weight: 700;
    color: #2a9a70;
}

.market {
    color: #1f8a65;
    padding-left: 7px;
    margin-left: 2px;
    line-height: 12px;
    background: radial-gradient(circle at 3px 6px, #20a878 2px, transparent 3px);
}

.news {
    display: flex;
    align-items: center;
    gap: 4px;
    height: 21px;
    margin: 6px 0 12px;
    padding: 0 5px;
    border-radius: 4px;
    background: #2a1d40;
    color: #d5cce0;
    line-height: 9px;
    white-space: nowrap;
}

.news span {
    flex: 1;
}

.details h2 {
    font-size: 7px;
    font-weight: 700;
}

.seasonals {
    display: block;
    width: 100%;
    height: 77px;
    margin-top: 2px;
    fill: none;
}

.rail {
    display: flex;
    flex-direction: column;
    align-items: center;
    width: 22px;
    padding-bottom: 1px;
    flex-shrink: 0;
    color: #a8a8a8;
}

.rail button {
    position: relative;
    width: 20px;
    height: 25px;
}

.rail .active {
    height: 19px;
    margin: 3px 0;
}

.rail .badge {
    top: 2px;
    right: -1px;
}

.rail .push {
    margin-top: auto;
}

.rail .apps {
    width: 19px;
    height: 19px;
    margin: 3px 0;
    border-radius: 50%;
    background: #fff;
    color: #111;
}

.rail hr {
    margin: 2px 0;
}

/* Dialog */

.dialog {
    position: absolute;
    top: 222px;
    left: 50%;
    transform: translateX(-50%);
    width: 208px;
    border-radius: 4px;
    background: #1c1d1c;
    box-shadow: 0 0 4px #000;
    color: #d5d5d5;
}

.dialog-head {
    display: flex;
    align-items: center;
    gap: 8px;
    height: 36px;
    padding: 0 14px 0 10px;
}

.dialog-head h2 {
    font-size: 11px;
    font-weight: 700;
}

.dialog-head button {
    margin-left: auto;
}

.tabs {
    display: flex;
    gap: 14px;
    margin: 0 12px 0 10px;
    box-shadow: inset 0 -2px #444;
    font-weight: 700;
}

.tabs button {
    height: 18px;
    padding-bottom: 3px;
    border-bottom: 2px solid transparent;
}

.tabs .current {
    border-color: #e5e5e5;
}

.fields {
    display: grid;
    grid-template-columns: 56px 54px 54px;
    column-gap: 5px;
    row-gap: 8px;
    align-items: center;
    padding: 13px 10px 20px;
    font-size: 8px;
    white-space: nowrap;
}

.field {
    display: flex;
    align-items: center;
    height: 19px;
    padding: 0 4px 0 3px;
    border: 1px solid #444;
    border-radius: 3px;
}

.field input {
    width: 100%;
    min-width: 0;
}

.focused {
    border-color: #4450d0;
    box-shadow: 0 0 0 1px #2b35a0;
}

.focused input {
    background: linear-gradient(#2c4fa8, #2c4fa8) 0 center / 25px 9px no-repeat;
}

.spin {
    display: flex;
    flex-direction: column;
    gap: 1px;
    color: #999;
}

.dialog-foot {
    display: flex;
    align-items: center;
    gap: 6px;
    height: 36px;
    padding: 0 11px 0 10px;
    border-top: 1px solid #2e2e2e;
}

.template {
    position: relative;
    margin-right: auto;
}

.template select {
    appearance: none;
    width: 55px;
    height: 19px;
    padding: 0 4px;
    border: 1px solid #383838;
    border-radius: 3px;
    font-size: 8px;
}

.template .icon {
    position: absolute;
    right: 4px;
    top: 6px;
    color: #888;
}

.cancel,
.ok {
    height: 19px;
    padding: 0 7px;
    border: 1px solid #8a8a8a;
    border-radius: 4px;
    font-weight: 700;
    font-size: 8px;
}

.ok {
    background: #fff;
    border-color: #fff;
    color: #111;
}

.cursor {
    position: absolute;
    left: 91px;
    top: 76px;
    width: 8px;
    height: 12px;
    fill: #111;
    stroke: #fff;
    stroke-width: 2;
}
```
